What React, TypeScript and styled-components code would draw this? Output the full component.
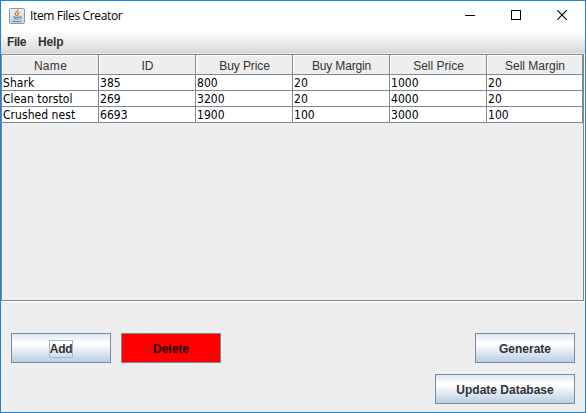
import React from "react";
import styled, { createGlobalStyle } from "styled-components";

const Global = createGlobalStyle`
  *, *::before, *::after { box-sizing: border-box; }
  html, body { margin: 0; padding: 0; background: #fff; }
`;

const line = "#7a8a99";

const Frame = styled.div`
  width: 586px;
  height: 413px;
  border: 1px solid #1883d7;
  background: #eeeeee;
  display: flex;
  flex-direction: column;
  overflow: hidden;
  font-family: "Liberation Sans", Arial, sans-serif;
  font-size: 12px;
  color: #333333;
  cursor: default;
  white-space: nowrap;
`;

const TitleBar = styled.header`
  height: 30px;
  flex: none;
  display: flex;
  align-items: center;
  background: #fff;
  padding-left: 8px;
`;

const Title = styled.h1<{ $spacing: number }>`
  flex: 1;
  margin: 0 0 0 5px;
  font: 400 12px/16px "Open Sans", "Noto Sans", sans-serif;
  letter-spacing: ${(p) => p.$spacing}px;
  color: #000;
`;

const WindowButton = styled.button`
  width: 46px;
  height: 30px;
  padding: 0 0 2px;
  border: 0;
  background: none;
  display: grid;
  place-items: center;
`;

const MenuBar = styled.nav`
  height: 22px;
  flex: none;
  display: flex;
  align-items: center;
  gap: 12px;
  padding-left: 6px;
  background: linear-gradient(#ffffff, #dadada);
  border-bottom: 1px solid #d4d4d4;
`;

const Label = styled.span<{ $spacing?: number }>`
  letter-spacing: ${(p) => p.$spacing ?? 0}px;
  line-height: 14px;
`;

const MenuItem = styled(Label)`
  font-weight: 700;
`;

const ScrollPane = styled.section`
  height: 248px;
  flex: none;
  margin-top: 1px;
  border-bottom: 1px solid #fff;
  border-right: 1px solid #fff;
`;

const Viewport = styled.div`
  height: 247px;
  border: 1px solid ${line};
`;

const Table = styled.div`
  width: 581px;
`;

const Row = styled.div`
  display: grid;
  grid-template-columns: repeat(5, 97px) 96px;
`;

const HeaderCell = styled.div`
  height: 20px;
  padding: 2px 0 0 1px;
  display: flex;
  align-items: center;
  justify-content: center;
  border-right: 1px solid ${line};
  border-bottom: 1px solid ${line};
  box-shadow: inset 1px 1px #fff;
`;

const Cell = styled.div`
  height: 16px;
  padding: 1px 0 0 1px;
  background: #fff;
  color: #000;
  border-right: 1px solid ${line};
  border-bottom: 1px solid ${line};
  font: 12px/15px "DejaVu Sans Condensed", "DejaVu Sans", sans-serif;
  font-stretch: condensed;
  letter-spacing: 0.05px;
`;

const Actions = styled.footer`
  flex: 1;
  display: flex;
  justify-content: space-between;
  align-items: flex-start;
  padding: 31px 10px 0;
`;

const ButtonGroup = styled.div<{ $stacked?: boolean }>`
  display: flex;
  flex-direction: ${(p) => (p.$stacked ? "column" : "row")};
  align-items: flex-end;
  gap: ${(p) => (p.$stacked ? 11 : 10)}px;
`;

const ActionButton = styled.button<{ $width?: number; $danger?: boolean }>`
  width: ${(p) => p.$width ?? 100}px;
  height: 30px;
  padding: 2px 0 0;
  display: flex;
  align-items: center;
  justify-content: center;
  border: 1px solid ${line};
  border-radius: 0;
  background: ${(p) =>
    p.$danger ? "#ff0000" : "linear-gradient(#dde8f3 0%, #ffffff 30%, #ffffff 36%, #b8cfe5 100%)"};
  color: ${(p) => (p.$danger ? "#1a0000" : "#333333")};
  font: 700 12px/14px "Liberation Sans", Arial, sans-serif;
`;

const FocusLabel = styled(Label)`
  height: 18px;
  line-height: 18px;
  margin-top: -1px;
  width: 24px;
  text-align: center;
  outline: 1px solid #a3b8cc;
  outline-offset: -1px;
`;

const JavaIcon = () => (
  <svg width="16" height="16" viewBox="0 0 16 16" fill="none" aria-hidden="true">
    <defs>
      <linearGradient id="tile" x1="0" y1="0" x2="0" y2="1">
        <stop offset="0" stopColor="#edf1f4" />
        <stop offset="1" stopColor="#c6d5e1" />
      </linearGradient>
    </defs>
    <rect x="0.5" y="0.5" width="15" height="15" rx="1" fill="url(#tile)" stroke="#8199ad" />
    <path d="M8.8 1.5C10 3.7 5.2 4.3 6.2 6.2C6.6 7 7.2 7.4 7.3 8.3M10.5 4.3C7.2 5.7 9.9 6.3 8.4 8.2" stroke="#e8762c" strokeWidth="1.3" />
    <path d="M4.2 8.7C5.2 9.6 9.6 9.5 11 8.8M5 10.6C6.2 11.3 9 11.3 10.2 10.6M11.2 8.7C13.6 8.4 12.9 10.5 11 10.9M3.6 12.5C2.4 13.8 9.8 14.2 12.3 12.8" stroke="#41718f" strokeWidth="0.9" />
  </svg>
);

const columns: [string, number][] = [
  ["Name", 0.3],
  ["ID", 0],
  ["Buy Price", -0.1],
  ["Buy Margin", -0.15],
  ["Sell Price", 0],
  ["Sell Margin", 0],
];

const items = [
  ["Shark", "385", "800", "20", "1000", "20"],
  ["Clean torstol", "269", "3200", "20", "4000", "20"],
  ["Crushed nest", "6693", "1900", "100", "3000", "100"],
];

export default function App() {
  return (
    <>
      <Global />
      <Frame>
        <TitleBar>
          <JavaIcon />
          <Title $spacing={-0.35}>Item Files Creator</Title>
          <WindowButton aria-label="Minimize">
            <svg width="10" height="10" shapeRendering="crispEdges"><path d="M0 5.5H10" stroke="#000" /></svg>
          </WindowButton>
          <WindowButton aria-label="Maximize">
            <svg width="10" height="10" shapeRendering="crispEdges"><rect x=".5" y=".5" width="9" height="9" fill="none" stroke="#000" /></svg>
          </WindowButton>
          <WindowButton aria-label="Close">
            <svg width="10" height="10"><path d="M.2.2L9.8 9.8M9.8.2L.2 9.8" stroke="#000" strokeWidth="1.1" /></svg>
          </WindowButton>
        </TitleBar>
        <MenuBar>
          <MenuItem $spacing={-0.4}>File</MenuItem>
          <MenuItem $spacing={-0.2}>Help</MenuItem>
        </MenuBar>
        <ScrollPane>
          <Viewport>
            <Table>
              <Row>
                {columns.map(([name, spacing]) => (
                  <HeaderCell key={name}><Label $spacing={spacing}>{name}</Label></HeaderCell>
                ))}
              </Row>
              {items.map((item) => (
                <Row key={item[0]}>
                  {item.map((value, i) => <Cell key={i}>{value}</Cell>)}
                </Row>
              ))}
            </Table>
          </Viewport>
        </ScrollPane>
        <Actions>
          <ButtonGroup>
            <ActionButton><FocusLabel $spacing={-0.3}>Add</FocusLabel></ActionButton>
            <ActionButton $danger><Label>Delete</Label></ActionButton>
          </ButtonGroup>
          <ButtonGroup $stacked>
            <ActionButton><Label>Generate</Label></ActionButton>
            <ActionButton $width={140}><Label>Update Database</Label></ActionButton>
          </ButtonGroup>
        </Actions>
      </Frame>
    </>
  );
}
